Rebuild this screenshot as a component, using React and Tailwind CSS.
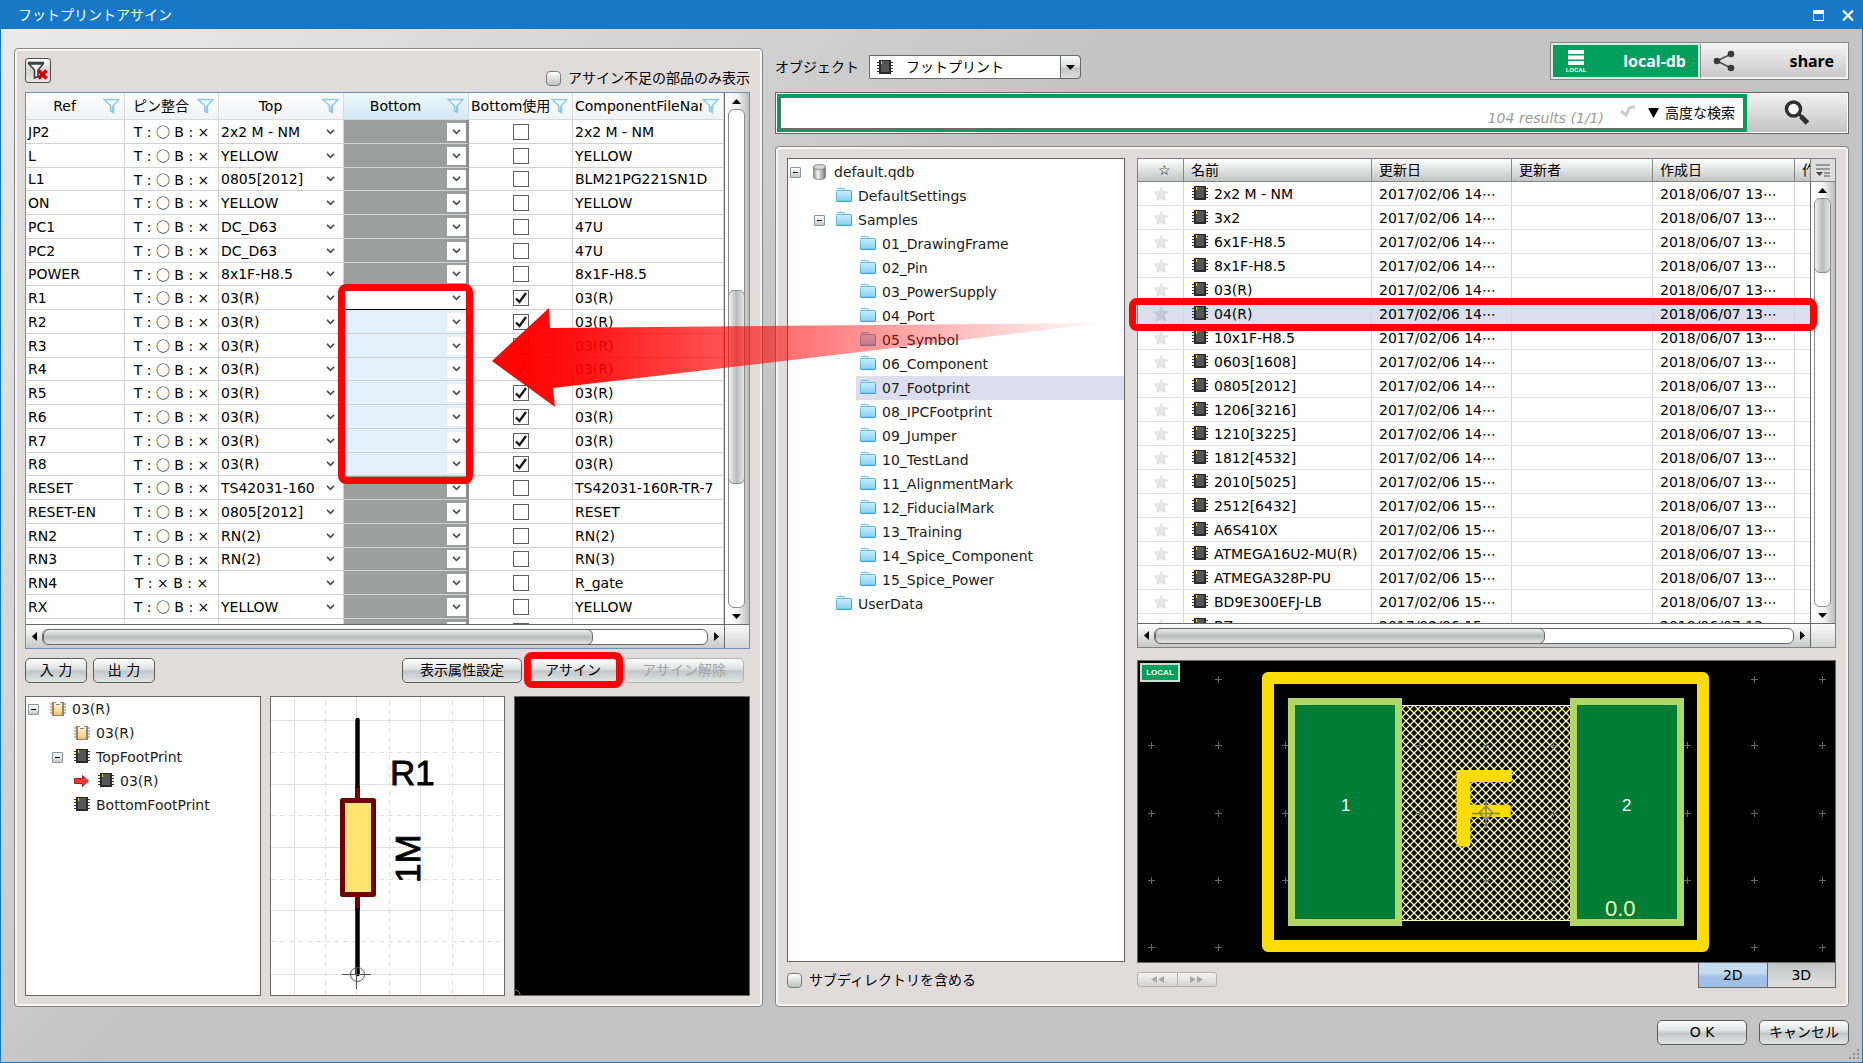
import { useState } from "react";
import clsx from "clsx";

const PARTS = [
  { ref: "JP2", top: "2x2 M - NM", file: "2x2 M - NM" },
  { ref: "L", top: "YELLOW", file: "YELLOW" },
  { ref: "L1", top: "0805[2012]", file: "BLM21PG221SN1D" },
  { ref: "ON", top: "YELLOW", file: "YELLOW" },
  { ref: "PC1", top: "DC_D63", file: "47U" },
  { ref: "PC2", top: "DC_D63", file: "47U" },
  { ref: "POWER", top: "8x1F-H8.5", file: "8x1F-H8.5" },
  { ref: "R1", top: "03(R)", file: "03(R)", state: "current" },
  { ref: "R2", top: "03(R)", file: "03(R)", state: "selected" },
  { ref: "R3", top: "03(R)", file: "03(R)", state: "selected" },
  { ref: "R4", top: "03(R)", file: "03(R)", state: "selected" },
  { ref: "R5", top: "03(R)", file: "03(R)", state: "selected" },
  { ref: "R6", top: "03(R)", file: "03(R)", state: "selected" },
  { ref: "R7", top: "03(R)", file: "03(R)", state: "selected" },
  { ref: "R8", top: "03(R)", file: "03(R)", state: "selected" },
  { ref: "RESET", top: "TS42031-160", file: "TS42031-160R-TR-7" },
  { ref: "RESET-EN", top: "0805[2012]", file: "RESET" },
  { ref: "RN2", top: "RN(2)", file: "RN(2)" },
  { ref: "RN3", top: "RN(2)", file: "RN(3)" },
  { ref: "RN4", noTop: true, top: "", file: "R_gate" },
  { ref: "RX", top: "YELLOW", file: "YELLOW" },
  { ref: "", blank: true, top: "", file: "" },
];

const FOOTPRINTS = [
  ["2x2 M - NM", 14],
  ["3x2", 14],
  ["6x1F-H8.5", 14],
  ["8x1F-H8.5", 14],
  ["03(R)", 14],
  ["04(R)", 14],
  ["10x1F-H8.5", 14],
  ["0603[1608]", 14],
  ["0805[2012]", 14],
  ["1206[3216]", 14],
  ["1210[3225]", 14],
  ["1812[4532]", 14],
  ["2010[5025]", 15],
  ["2512[6432]", 15],
  ["A6S410X", 15],
  ["ATMEGA16U2-MU(R)", 15],
  ["ATMEGA328P-PU", 15],
  ["BD9E300EFJ-LB", 15],
  ["BZ", 15],
];

const LIBRARY = [
  { label: "default.qdb", level: 0, icon: "db", open: true },
  { label: "DefaultSettings", level: 1, icon: "folder" },
  { label: "Samples", level: 1, icon: "folder", open: true },
  { label: "01_DrawingFrame", level: 2, icon: "folder" },
  { label: "02_Pin", level: 2, icon: "folder" },
  { label: "03_PowerSupply", level: 2, icon: "folder" },
  { label: "04_Port", level: 2, icon: "folder" },
  { label: "05_Symbol", level: 2, icon: "folder" },
  { label: "06_Component", level: 2, icon: "folder" },
  { label: "07_Footprint", level: 2, icon: "folder", selected: true },
  { label: "08_IPCFootprint", level: 2, icon: "folder" },
  { label: "09_Jumper", level: 2, icon: "folder" },
  { label: "10_TestLand", level: 2, icon: "folder" },
  { label: "11_AlignmentMark", level: 2, icon: "folder" },
  { label: "12_FiducialMark", level: 2, icon: "folder" },
  { label: "13_Training", level: 2, icon: "folder" },
  { label: "14_Spice_Component", level: 2, icon: "folder" },
  { label: "15_Spice_Power", level: 2, icon: "folder" },
  { label: "UserData", level: 1, icon: "folder" },
];

const ASSIGNED = [
  { label: "03(R)", level: 0, icon: "part", open: true },
  { label: "03(R)", level: 1, icon: "part" },
  { label: "TopFootPrint", level: 1, icon: "chip", open: true },
  { label: "03(R)", level: 2, icon: "chip", arrow: true },
  { label: "BottomFootPrint", level: 1, icon: "chip" },
];

const INDENT = ["pl-0", "pl-6", "pl-12"];

function ChipIcon() {
  return (
    <svg width="16" height="16" viewBox="0 0 16 16" className="shrink-0">
      {[2.5, 5.5, 8.5, 11.5].map((y) => (
        <path key={y} d={`M0 ${y}H16`} stroke="#333" strokeWidth="1" />
      ))}
      <rect x="2" y="0" width="12" height="14" fill="#2a2a2a" />
      <rect x="4" y="1" width="8" height="11" fill="#565656" />
      <rect x="4" y="1" width="1" height="3" fill="#e8d800" />
    </svg>
  );
}

function PartIcon() {
  return (
    <svg width="16" height="16" viewBox="0 0 16 16" className="shrink-0">
      {[3, 6, 9, 12].map((y) => (
        <g key={y}>
          <path d={`M0 ${y}H3`} stroke="#d06a3c" />
          <path d={`M13 ${y}H16`} stroke="#777" />
        </g>
      ))}
      <path d="M2 1h4v2h4V1h4v14H2z" fill="#8d8574" />
      <path d="M4 2h2v2h4V2h2v12H4z" fill="url(#partFill)" />
      <defs>
        <linearGradient id="partFill" x1="0" y1="0" x2="0" y2="1">
          <stop offset="0" stopColor="#fff6e0" />
          <stop offset="1" stopColor="#f3c766" />
        </linearGradient>
      </defs>
    </svg>
  );
}

function FolderIcon() {
  return (
    <svg width="16" height="16" viewBox="0 0 16 16" className="shrink-0">
      <defs>
        <linearGradient id="folderFill" x1="0" y1="0" x2="0" y2="1">
          <stop offset="0" stopColor="#c9ecfb" />
          <stop offset="1" stopColor="#8bd3f4" />
        </linearGradient>
      </defs>
      <path d="M1.5 4V1.5a1 1 0 0 1 1-1h5a1 1 0 0 1 1 1V3" fill="#dff3fc" stroke="#5fbfe0" />
      <path d="M.5 3.500a1 1 0 0 1 1-1h13a1 1 0 0 1 1 1v9.500h-15z" fill="url(#folderFill)" stroke="#62bfe2" />
      <path d="M.5 13.500h15V3.500" fill="none" stroke="#36abd8" />
    </svg>
  );
}

function DbIcon() {
  return (
    <svg width="16" height="16" viewBox="0 0 16 16" className="shrink-0">
      <defs>
        <linearGradient id="dbFill">
          <stop offset="0" stopColor="#8a8a8a" />
          <stop offset=".35" stopColor="#f4f4f4" />
          <stop offset="1" stopColor="#777" />
        </linearGradient>
      </defs>
      <path d="M1.500 3v10c0 1.300 2.500 2.500 6 2.500s6-1.200 6-2.500V3" fill="url(#dbFill)" stroke="#8a8a8a" />
      <ellipse cx="7.500" cy="3" rx="6" ry="2.500" fill="#d9d9d9" stroke="#8a8a8a" />
    </svg>
  );
}

const ICONS = { db: DbIcon, folder: FolderIcon, part: PartIcon, chip: ChipIcon };

function FunnelIcon() {
  return (
    <svg width="17" height="16" viewBox="0 0 17 16" className="shrink-0">
      <path d="M1 1.500h15l-5.500 6v7l-3-1.500V7.500z" fill="#f2fafd" stroke="#8ccbe8" strokeWidth="1.400" />
      <path d="M8.500 8h2v6.500l-2-1z" fill="#8ccbe8" />
    </svg>
  );
}

function StarIcon() {
  return (
    <svg width="16" height="16" viewBox="0 0 16 16" className="mx-auto">
      <path d="M8 0l2.300 5 5.700.5-4 4 1.300 6L8 13.200 2.700 15.500l1.300-6-4-4L5.700 5z" fill="#000" fillOpacity=".1" />
    </svg>
  );
}

function Chevron({ className }) {
  return (
    <svg width="9" height="6" viewBox="0 0 9 6" className={clsx("pointer-events-none absolute", className)}>
      <path d="M1 .8l3.500 3.500L8 .8" fill="none" stroke="#505050" strokeWidth="1.700" />
    </svg>
  );
}

function Toggle() {
  return (
    <button
      type="button"
      aria-label="collapse"
      className="ml-[2px] flex size-[11px] items-center justify-center rounded-[1px] border border-[#8496ac] bg-linear-to-b from-white to-[#cfc9bf]"
    >
      <span className="h-px w-[5px] bg-black" />
    </button>
  );
}

function RedArrow() {
  return (
    <svg width="15" height="12" viewBox="0 0 15 12">
      <path d="M.5 3.500h8v-3l6 5.500-6 5.500v-3h-8z" fill="#e23a35" stroke="#c01616" />
    </svg>
  );
}

function Tree({ items, className }) {
  return (
    <ul className={clsx("overflow-hidden border border-[#686868] bg-white", className)}>
      {items.map((item, i) => {
        const Icon = ICONS[item.icon];
        return (
          <li key={i} className={clsx("flex h-6 items-center", INDENT[item.level])}>
            <span className="flex h-full w-5 shrink-0 items-center">
              {item.open && <Toggle />}
              {item.arrow && <RedArrow />}
            </span>
            <span className={clsx("flex h-full flex-1 items-center gap-[6px] pl-1 whitespace-nowrap text-[#1c1c1c]", item.selected && "bg-[#dcdeee]")}>
              <Icon />
              {item.label}
            </span>
          </li>
        );
      })}
    </ul>
  );
}

function VScroll({ thumb }) {
  return (
    <div className="flex min-h-0 flex-1 flex-col items-center border-l border-[#686868] bg-linear-to-r from-white via-[#f4f4f4] to-[#bdbdbd] pr-[2px]">
      <button type="button" aria-label="up" className="flex h-4 items-center">
        <svg width="9" height="5"><path d="M0 5L4.500 0 9 5z" /></svg>
      </button>
      <div className="min-h-0 w-[17px] flex-1 overflow-hidden rounded-[6px] border border-[#8a8a8a] bg-white">
        <div className={clsx("-mx-px rounded-[6px] border border-[#8a8a8a] bg-linear-to-r from-[#f4f4f4] via-[#b9bcbc] to-[#e6e6e6]", thumb)} />
      </div>
      <button type="button" aria-label="down" className="flex h-4 items-center">
        <svg width="9" height="5"><path d="M0 0L4.500 5 9 0z" /></svg>
      </button>
    </div>
  );
}

function HScroll({ thumb }) {
  return (
    <div className="flex h-6 shrink-0 border-t border-[#686868]">
      <div className="flex flex-1 items-center bg-linear-to-b from-white to-[#c9c9c9]">
        <button type="button" aria-label="left" className="flex w-4 justify-center">
          <svg width="5" height="9"><path d="M5 0L0 4.500 5 9z" /></svg>
        </button>
        <div className="h-4 flex-1 overflow-hidden rounded-[6px] border border-[#686868] bg-white">
          <div className={clsx("-my-px h-4 rounded-[6px] border border-[#686868] bg-linear-to-b from-[#efefef] via-[#b9bcbc] to-[#e6e6e6]", thumb)} />
        </div>
        <button type="button" aria-label="right" className="flex w-4 justify-center">
          <svg width="5" height="9"><path d="M0 0L5 4.500 0 9z" /></svg>
        </button>
      </div>
      <div className="w-[25px] border-l border-[#686868] bg-linear-to-b from-[#fafafa] to-[#d6d6d6]" />
    </div>
  );
}

function PushButton({ children, className, disabled }) {
  return (
    <button
      type="button"
      disabled={disabled}
      className={clsx(
        "h-[25px] rounded-[5px] border bg-[linear-gradient(#fdfdfd,#e2e5e5_40%,#c3c7c7_55%,#e4e6e6)] pb-px leading-5",
        disabled ? "border-[#b3b3b3] text-[#a5a5a5]" : "border-[#5b5b5b]",
        className
      )}
    >
      {children}
    </button>
  );
}

function GreyCheckbox({ label }) {
  return (
    <label className="flex items-center gap-[7px]">
      <input
        type="checkbox"
        className="size-[15px] appearance-none rounded-[4px] border border-[#7c7c7c] bg-linear-to-b from-white to-[#bfc2c2] checked:bg-[#888]"
      />
      {label}
    </label>
  );
}

function HeaderCell({ children, active, className }) {
  return (
    <th
      className={clsx(
        "h-[27px] border-r border-b border-[#d9d9d9] p-0 font-normal",
        active ? "bg-linear-to-b from-[#eef8fc] to-[#d3eaf5]" : "bg-linear-to-b from-white to-[#f1f2f4]"
      )}
    >
      <div className="flex items-center pr-1">
        <span className={clsx("min-w-0 flex-1 overflow-hidden whitespace-nowrap", className)}>{children}</span>
        <FunnelIcon />
      </div>
    </th>
  );
}

function PinMatch({ top }) {
  return (
    <span className="whitespace-pre">
      T : {top ? <span className="font-['Noto_Sans_CJK_JP',sans-serif]">○</span> : "×"} B : ×
    </span>
  );
}

function PartRow({ part }) {
  const [used, setUsed] = useState(Boolean(part.state));
  const cell = "border-r border-b border-[#d2d2d2] p-0";

  return (
    <tr className="h-6 [&:nth-child(4n+3)]:h-[23px]">
      <td className={clsx(cell, "pl-[2px]")}>{part.ref}</td>
      <td className={clsx(cell, "text-center")}>{!part.blank && <PinMatch top={!part.noTop} />}</td>
      <td className={cell}>
        <div className="relative flex h-[22px] items-center">
          <select aria-label={`Top ${part.ref}`} className="w-full appearance-none pr-4 pl-[2px]">
            <option>{part.top}</option>
          </select>
          <Chevron className="top-2 right-2" />
        </div>
      </td>
      <td
        className={clsx(
          "border-b p-0",
          !part.state && "border-r-3 border-b-[#d2d2d2] border-r-[#8b8d8c] bg-[#9d9f9e]",
          part.state === "selected" && "border-r-3 border-b-[#d2d2d2] border-r-[#e4f0fa] bg-[#e4f0fa]",
          part.state === "current" && "border-r-3 border-l border-b-black border-l-black border-r-white bg-white"
        )}
      >
        <div className="relative flex h-[22px] items-center justify-end">
          <select aria-label={`Bottom ${part.ref}`} className="w-full flex-1 appearance-none">
            <option></option>
          </select>
          <span className="h-[18px] w-[19px] shrink-0 bg-white" />
          <Chevron className="top-2 right-[5px]" />
        </div>
      </td>
      <td className={cell}>
        <label className="relative mx-auto flex size-4">
          <input
            type="checkbox"
            aria-label={`Bottom使用 ${part.ref}`}
            checked={used}
            onChange={(e) => setUsed(e.target.checked)}
            className="size-4 appearance-none border border-[#5f5f5f] bg-white"
          />
          {used && (
            <svg width="16" height="16" viewBox="0 0 16 16" className="pointer-events-none absolute inset-0">
              <path d="M3 8.500l3.500 3.500 6.500-9" fill="none" stroke="#1a1a1a" strokeWidth="2.400" />
            </svg>
          )}
        </label>
      </td>
      <td className={clsx(cell, "overflow-hidden pl-[2px] whitespace-nowrap")}>{part.file}</td>
    </tr>
  );
}

function PartsTable() {
  return (
    <div className="flex min-h-0 flex-1 flex-col border border-[#6b8fb5] bg-white">
      <div className="flex min-h-0 flex-1">
        <div className="min-w-0 flex-1 overflow-hidden">
          <table className="w-full table-fixed border-separate border-spacing-0">
            <colgroup>
              <col className="w-[99px]" />
              <col className="w-[94px]" />
              <col className="w-[125px]" />
              <col className="w-[125px]" />
              <col className="w-[104px]" />
              <col />
            </colgroup>
            <thead>
              <tr>
                <HeaderCell>Ref</HeaderCell>
                <HeaderCell>ピン整合</HeaderCell>
                <HeaderCell>Top</HeaderCell>
                <HeaderCell active>Bottom</HeaderCell>
                <HeaderCell className="pl-[2px] text-left">Bottom使用</HeaderCell>
                <HeaderCell className="pl-[2px] text-left">ComponentFileName</HeaderCell>
              </tr>
            </thead>
            <tbody>
              {PARTS.map((part, i) => (
                <PartRow key={i} part={part} />
              ))}
            </tbody>
          </table>
        </div>
        <div className="flex w-[25px]">
          <VScroll thumb="mt-[180px] h-[194px]" />
        </div>
      </div>
      <HScroll thumb="w-[550px]" />
    </div>
  );
}

function Schematic() {
  return (
    <svg className="size-full" viewBox="0 0 234 298" preserveAspectRatio="xMinYMin slice">
      <g stroke="#e0e0e0" fill="none">
        <path d="M23.500 0V298M85.500 0V298M149.500 0V298M212.500 0V298M0 23.500H234M0 87.500H234M0 150.500H234M0 213.500H234M0 277.500H234" />
        <path d="M54.500 4V298M118.500 4V298M181.500 4V298M0 55.500H234M0 118.500H234M0 182.500H234M0 244.500H234" strokeDasharray="5 4" />
      </g>
      <path d="M86.500 89V101M86.500 200V213" stroke="#730000" strokeWidth="5" />
      <path d="M86.500 23V89M86.500 213V277" stroke="#000" strokeWidth="4.500" strokeLinecap="round" />
      <rect x="71.500" y="103.500" width="31" height="94" fill="#ffe472" stroke="#730000" strokeWidth="5" strokeLinejoin="round" />
      <circle cx="86.500" cy="277.500" r="7" fill="none" stroke="#555" />
      <path d="M71 277.500H100M85.500 271V292" stroke="#555" />
      <text x="119" y="88" fontFamily="Liberation Sans" fontSize="35" stroke="#000" strokeWidth=".8">R1</text>
      <text transform="translate(149 186) rotate(-90)" fontFamily="Liberation Sans" fontSize="35" stroke="#000" strokeWidth=".8">1M</text>
    </svg>
  );
}

function FootprintPreview() {
  const xs = [13, 80, 147, 214, 281, 348, 415, 482, 549, 616, 684];
  const ys = [18, 84, 152, 219, 286];
  return (
    <svg className="size-full" viewBox="0 0 697 301" preserveAspectRatio="xMidYMid meet">
      <defs>
        <pattern id="hatch" width="8" height="8" patternUnits="userSpaceOnUse">
          <path d="M0 0L8 8M8 0L0 8" stroke="#ffffb4" strokeWidth="1.300" />
        </pattern>
        <clipPath id="gridClip">
          <path d="M0 0H150V301H0zM546 0H697V301H546zM264 60H432V240H264z" />
        </clipPath>
      </defs>
      <rect x="264" y="44.500" width="168" height="215" fill="url(#hatch)" />
      <path d="M264 44.500H432M264 259.500H432" stroke="#ffffb4" />
      <g fill="#007d37" stroke="#b2d666" strokeWidth="7">
        <rect x="153.500" y="40.500" width="107" height="221" />
        <rect x="435.500" y="40.500" width="107" height="221" />
      </g>
      <path
        d={xs.flatMap((x) => ys.map((y) => `M${x - 3} ${y + 0.5}h7M${x + 0.5} ${y - 3}v7`)).filter((_, i) => i > 0).join("")}
        stroke="#666"
        clipPath="url(#gridClip)"
      />
      <rect x="130" y="17" width="435" height="268" fill="none" stroke="#ffdb00" strokeWidth="12" strokeLinejoin="round" />
      <text x="312" y="184" fontFamily="Liberation Sans" fontSize="105" fill="#ffdb00" stroke="#ffdb00" strokeWidth="4" strokeLinejoin="round">F</text>
      <path d="M334 152.500H362M348 138V167M341 152l7-7 7 7-7 7z" fill="none" stroke="#808080" strokeWidth="1.500" />
      <text x="203" y="150" fontFamily="Liberation Sans" fontSize="17" fill="#fff">1</text>
      <text x="484" y="150" fontFamily="Liberation Sans" fontSize="17" fill="#fff">2</text>
      <text x="467" y="255" fontFamily="Liberation Sans" fontSize="22" fill="#ffffb4">0.0</text>
    </svg>
  );
}

function FootprintTable() {
  const head = "h-[23px] border-b border-l border-[#868686] p-0 text-left font-normal first:border-l-0 bg-linear-to-b from-white to-[#c3c5c5] whitespace-nowrap overflow-hidden";
  const cell = "border-b border-l border-b-[#dedee2] border-l-[#d3d3e6] p-0 first:border-l-0 whitespace-nowrap overflow-hidden";

  return (
    <div className="mb-3 flex min-h-0 flex-1 flex-col border border-[#7d828c] bg-white">
      <div className="flex min-h-0 flex-1">
        <div className="min-w-0 flex-1 overflow-hidden">
          <table className="w-full table-fixed border-separate border-spacing-0">
            <colgroup>
              <col className="w-[45px]" />
              <col className="w-[188px]" />
              <col className="w-[140px]" />
              <col className="w-[141px]" />
              <col className="w-[142px]" />
              <col />
            </colgroup>
            <thead>
              <tr>
                <th className={clsx(head, "pl-5")}>☆</th>
                <th className={clsx(head, "pl-[7px]")}>名前</th>
                <th className={clsx(head, "pl-[7px]")}>更新日</th>
                <th className={clsx(head, "pl-[7px]")}>更新者</th>
                <th className={clsx(head, "pl-[7px]")}>作成日</th>
                <th className={clsx(head, "pl-[7px]")}>作成者</th>
              </tr>
            </thead>
            <tbody>
              {FOOTPRINTS.map(([name, hour]) => (
                <tr key={name} className={clsx("h-6", name === "04(R)" && "bg-[#dcdeee]")}>
                  <td className={cell}><StarIcon /></td>
                  <td className={clsx(cell, "pl-2")}>
                    <span className="flex items-center gap-[6px]"><ChipIcon />{name}</span>
                  </td>
                  <td className={clsx(cell, "pl-[7px]")}>2017/02/06 {hour}⋯</td>
                  <td className={cell}></td>
                  <td className={clsx(cell, "pl-[7px]")}>2018/06/07 13⋯</td>
                  <td className={cell}></td>
                </tr>
              ))}
            </tbody>
          </table>
        </div>
        <div className="flex w-[25px] flex-col">
          <button type="button" aria-label="columns" className="flex h-[23px] items-center justify-center border-b border-l border-[#868686] bg-[#dedede]">
            <svg width="14" height="13" viewBox="0 0 14 13">
              <path d="M0 1H14M0 5H14M8 9H14M8 12H14" stroke="#555" strokeWidth="1.200" />
              <path d="M0 8h7l-3.500 4z" fill="#444" />
            </svg>
          </button>
          <VScroll thumb="-mt-px h-[75px]" />
        </div>
      </div>
      <HScroll thumb="w-[390px]" />
    </div>
  );
}

function Toolbar() {
  return (
    <div className="flex h-[38px] items-end justify-between">
      <div className="flex items-center gap-[10px] pb-px">
        <label htmlFor="object">オブジェクト</label>
        <div className="relative flex h-6 w-[212px]">
          <select id="object" className="h-full w-full appearance-none rounded-r-[4px] border border-[#686868] bg-white pl-[36px]">
            <option>フットプリント</option>
          </select>
          <span className="pointer-events-none absolute top-[5px] left-2"><ChipIcon /></span>
          <span className="pointer-events-none absolute top-0 right-0 flex h-6 w-[21px] items-center justify-center rounded-r-[4px] border border-[#686868] bg-[linear-gradient(#fdfdfd,#d9dbdb_50%,#c3c6c6_55%,#dedede)]">
            <svg width="9" height="5"><path d="M0 0L4.500 5 9 0z" /></svg>
          </span>
        </div>
      </div>
      <div className="flex h-[38px] w-[299px] border border-[#868686] bg-white font-['Noto_Sans','Noto_Sans_CJK_JP',sans-serif] text-base font-bold">
        <button type="button" className="flex flex-1 items-center justify-between border-2 border-[#d9ebe2] bg-[#009e5c] pr-3 pl-3 text-white">
          <svg width="22" height="24" viewBox="0 0 22 24">
            <path d="M3 3H19M3 8.500H19M3 14H19" stroke="#fff" strokeWidth="4" />
            <text x="11" y="23" textAnchor="middle" fontFamily="Liberation Sans" fontSize="6" fontWeight="bold" fill="#fff">LOCAL</text>
          </svg>
          local-db
        </button>
        <button type="button" className="flex flex-1 items-center justify-between border-2 border-l border-[#f4f4f4] border-l-[#868686] bg-linear-to-b from-[#f2f2f2] to-[#c9c9c9] pr-3 pl-3">
          <svg width="22" height="22" viewBox="0 0 22 22">
            <path d="M18 4L4 11l14 7" fill="none" stroke="#4a4a4a" strokeWidth="1.500" />
            <circle cx="18" cy="4" r="3.300" fill="#3a3a3a" />
            <circle cx="4" cy="11" r="3.300" fill="#3a3a3a" />
            <circle cx="18" cy="18" r="3.300" fill="#3a3a3a" />
          </svg>
          share
        </button>
      </div>
    </div>
  );
}

function SearchBar() {
  return (
    <div className="my-3 flex h-[42px] border border-[#686868] bg-white p-px">
      <div className="flex flex-1 border-3 border-[#009e5c]">
        <div className="flex flex-1 items-center border border-[#686868] bg-white pr-2">
          <input type="text" aria-label="search" className="h-full min-w-0 flex-1 px-2 outline-none" />
          <span className="self-end text-[#9c9c9c] italic">104 results (1/1)</span>
          <svg width="16" height="12" viewBox="0 0 16 12" className="mb-1 ml-4">
            <path d="M1 6l5 4L9 3.500l3-1.500h3" fill="none" stroke="#ccc" strokeWidth="3" />
          </svg>
          <button type="button" className="ml-3 flex items-center gap-[6px]">
            <svg width="11" height="10"><path d="M0 0H11L5.500 10z" /></svg>
            高度な検索
          </button>
        </div>
      </div>
      <button type="button" aria-label="run search" className="flex w-[100px] items-center justify-center bg-linear-to-b from-[#f2f2f2] to-[#c4c4c4]">
        <svg width="26" height="26" viewBox="0 0 26 26">
          <ellipse cx="9.500" cy="9" rx="7" ry="7" fill="#fff" stroke="#303030" strokeWidth="3.500" />
          <path d="M15 14l3 3" stroke="#303030" strokeWidth="3" />
          <path d="M17 16.500l6.500 6.500" stroke="#303030" strokeWidth="5" />
        </svg>
      </button>
    </div>
  );
}

// Red call-outs drawn over the window: target cells, dragged row and the arrow between them
function CallOuts() {
  return (
    <div className="pointer-events-none">
      <div className="absolute top-[283px] left-[337px] h-[200px] w-[135px] rounded-lg border-[7px] border-[#f00]" />
      <div className="absolute top-[297px] left-[1128px] h-[33px] w-[688px] rounded-lg border-[7px] border-[#f00]" />
      <svg width="614" height="102" viewBox="0 0 614 102" className="absolute top-[306px] left-[490px]">
        <defs>
          <linearGradient id="fade">
            <stop offset="0" stopColor="#f00" />
            <stop offset=".12" stopColor="#f00" stopOpacity=".95" />
            <stop offset="1" stopColor="#f00" stopOpacity="0" />
          </linearGradient>
        </defs>
        <path d="M1 54L58 1l1 20L614 16 62 81l2 19z" fill="url(#fade)" />
      </svg>
    </div>
  );
}

export default function App() {
  const [view, setView] = useState("2D");
  const panel = "rounded-[4px] border border-[#868686] bg-[#e0dcdb] shadow-[inset_0_0_0_2px_#f7f6f6]";

  return (
    <main className="relative flex h-screen flex-col border border-[#1878c8] bg-[linear-gradient(135deg,#ececec,#c4c4c4_40%)] font-['DejaVu_Sans','Noto_Sans_CJK_JP',sans-serif] text-[14px] leading-5 text-black">
      <header className="flex h-7 items-center justify-between bg-[#1878c8] pr-2 pl-[17px] text-white">
        <h1>フットプリントアサイン</h1>
        <div className="flex items-center gap-[18px]">
          <button type="button" aria-label="maximize">
            <svg width="11" height="11"><path d="M.5 .5h10v10H.5z" fill="none" stroke="#fff" /><path d="M0 0h11v4H0z" fill="#fff" /></svg>
          </button>
          <button type="button" aria-label="close">
            <svg width="12" height="11"><path d="M1 .5l10 10M11 .5l-10 10" stroke="#fff" strokeWidth="2.200" /></svg>
          </button>
        </div>
      </header>

      <div className="grid min-h-0 flex-1 grid-cols-[749fr_1074fr] gap-3 px-[13px]">
        <section className={clsx("mt-[19px] flex min-h-0 min-w-0 flex-col pr-3 pb-[10px] pl-[10px]", panel)}>
          <div className="flex h-[43px] shrink-0 items-start justify-between">
            <button type="button" aria-label="clear filter" className="mt-[9px] flex h-[25px] w-[26px] items-center justify-center rounded-[3px] border border-[#4d4d4d] bg-linear-to-b from-white via-[#d0d2d2] to-[#e8e8e8]">
              <svg width="22" height="20" viewBox="0 0 22 20">
                <path d="M1 1.500h16M2 3l5.500 6v8l3.500-1.500V9L16 3z" fill="#f6f6f6" stroke="#3f3f3f" strokeWidth="1.600" />
                <path d="M1 1h16v2H1z" fill="#3f3f3f" />
                <path d="M11.500 9.500l8 8M19.500 9.500l-8 8" stroke="#d60000" strokeWidth="3.600" />
              </svg>
            </button>
            <div className="mt-[19px]"><GreyCheckbox label="アサイン不足の部品のみ表示" /></div>
          </div>

          <PartsTable />

          <div className="flex h-[47px] shrink-0 items-start gap-[6px] pt-[9px] pr-[6px]">
            <PushButton className="w-[62px]">入 力</PushButton>
            <PushButton className="w-[62px]">出 力</PushButton>
            <div className="flex-1" />
            <PushButton className="w-[120px]">表示属性設定</PushButton>
            <div className="relative">
              <PushButton className="w-[90px]">アサイン</PushButton>
              <div className="pointer-events-none absolute -top-[6px] -right-[5px] -left-1 h-9 rounded-lg border-[7px] border-[#f00]" />
            </div>
            <PushButton disabled className="w-[120px]">アサイン解除</PushButton>
          </div>

          <div className="grid h-[300px] shrink-0 grid-cols-3 gap-[9px]">
            <Tree items={ASSIGNED} />
            <div className="overflow-hidden border border-[#686868] bg-white"><Schematic /></div>
            <div className="flex items-end overflow-hidden border border-[#686868] bg-black">
              <svg width="7" height="7"><circle cx="0" cy="7" r="5" fill="none" stroke="#808080" /></svg>
            </div>
          </div>
        </section>

        <section className="flex min-h-0 min-w-0 flex-col pt-[13px]">
          <Toolbar />
          <SearchBar />
          <div className={clsx("grid min-h-0 flex-1 grid-cols-[338fr_699fr] gap-3 pt-[11px] pr-3 pl-[11px]", panel)}>
            <div className="flex min-h-0 min-w-0 flex-col pb-2">
              <Tree items={LIBRARY} className="flex-1 pt-px" />
              <div className="flex h-9 shrink-0 items-center">
                <GreyCheckbox label="サブディレクトリを含める" />
              </div>
            </div>
            <div className="flex min-h-0 min-w-0 flex-col">
              <FootprintTable />
              <div className="relative h-[303px] shrink-0 border border-[#686868] bg-black">
                <FootprintPreview />
                <span className="absolute top-[2px] left-[2px] flex h-[19px] w-10 items-center justify-center border-2 border-[#c9ddd3] bg-[#009e5c] font-['Liberation_Sans'] text-[8px] font-bold text-white">LOCAL</span>
              </div>
              <div className="flex h-[43px] shrink-0 items-start justify-between">
                <div className="mt-[9px] flex h-[15px] w-20 divide-x divide-[#b3b3b3] rounded-[3px] border border-[#b3b3b3] bg-linear-to-b from-[#f4f4f4] to-[#d4d4d4]">
                  <button type="button" aria-label="previous" disabled className="flex flex-1 items-center justify-center">
                    <svg width="13" height="7"><path d="M6 0v7L0 3.500zM13 0v7L7 3.500z" fill="#a9a9a9" /></svg>
                  </button>
                  <button type="button" aria-label="next" disabled className="flex flex-1 items-center justify-center">
                    <svg width="13" height="7"><path d="M0 0v7l6-3.500zM7 0v7l6-3.500z" fill="#a9a9a9" /></svg>
                  </button>
                </div>
                <div className="flex h-[25px] w-[138px] divide-x divide-[#686868] border border-t-0 border-[#686868]">
                  {["2D", "3D"].map((v) => (
                    <button
                      key={v}
                      type="button"
                      onClick={() => setView(v)}
                      className={clsx(
                        "flex-1 bg-linear-to-b",
                        view === v ? "from-[#c4dbf1] from-40% to-[#9fbfe4] to-60%" : "from-[#c3c5c5] to-[#dedede]"
                      )}
                    >
                      {v}
                    </button>
                  ))}
                </div>
              </div>
            </div>
          </div>
        </section>
      </div>

      <footer className="relative flex h-[55px] shrink-0 justify-end gap-3 px-[13px] pt-[13px]">
        <PushButton className="w-[90px]">O K</PushButton>
        <PushButton className="w-[90px]">キャンセル</PushButton>
        <svg width="11" height="11" className="absolute right-[2px] bottom-[2px]">
          <path d="M8 0h2v2H8zM4 4h2v2H4zM8 4h2v2H8zM0 8h2v2H0zM4 8h2v2H4zM8 8h2v2H8z" fill="#8d8d8d" />
        </svg>
      </footer>

      <CallOuts />
    </main>
  );
}
